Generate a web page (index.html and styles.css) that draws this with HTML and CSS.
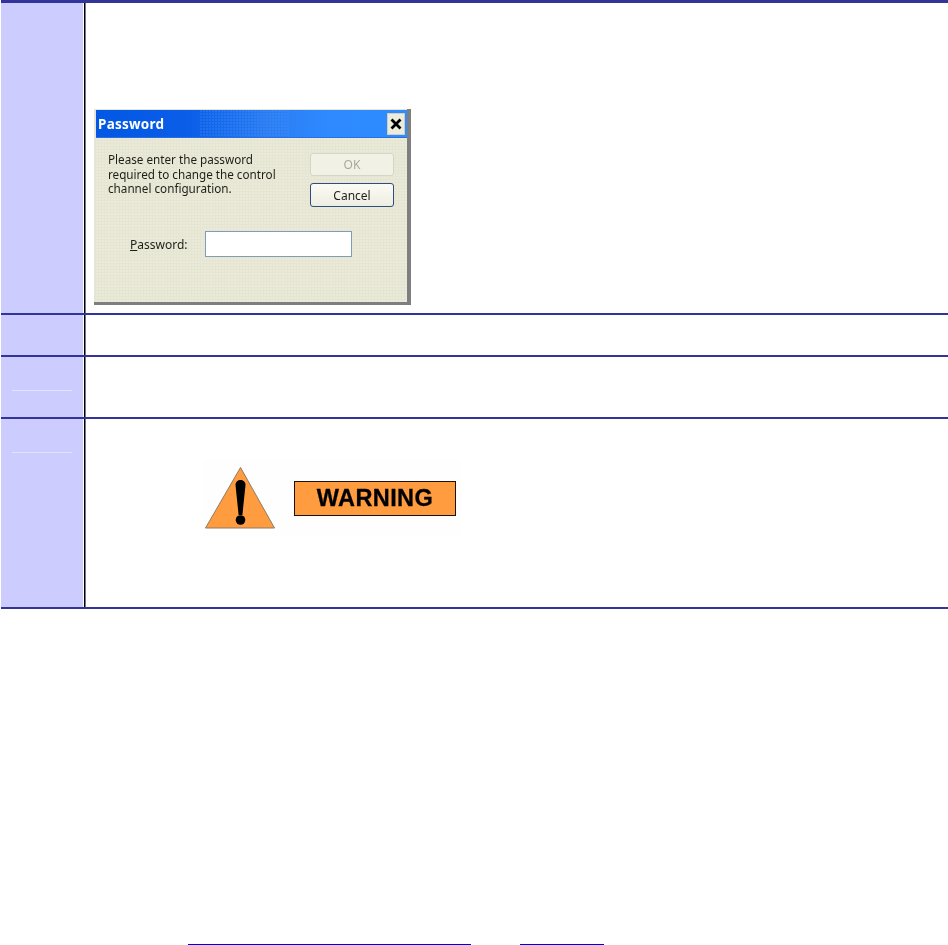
FILE: index.html
```html
<!DOCTYPE html>
<html lang="en">
<head>
<meta charset="utf-8">
<title>Password</title>
<link rel="stylesheet" href="styles.css">
</head>
<body>
<div class="table">
  <div class="row row-first">
    <div class="side"></div>
    <div class="main main-dialog">
      <div class="dialog">
        <div class="dialog-title">
          <span class="dialog-name">Password</span>
          <span class="dialog-close">
            <svg width="12" height="12" viewBox="0 0 12 12"><path d="M1.5 1.5 L10.5 10.5 M10.5 1.5 L1.5 10.5" stroke="#000" stroke-width="2.8" fill="none"/></svg>
          </span>
        </div>
        <div class="dialog-body">
          <div class="dialog-top">
            <p class="dialog-text">Please enter the password<br>required to change the control<br>channel configuration.</p>
            <div class="dialog-buttons">
              <span class="btn btn-off">OK</span>
              <span class="btn btn-on">Cancel</span>
            </div>
          </div>
          <div class="dialog-field">
            <span class="field-label"><u>P</u>assword:</span>
            <span class="field-input"></span>
          </div>
        </div>
      </div>
    </div>
  </div>
  <div class="row row-second">
    <div class="side"></div>
    <div class="main"></div>
  </div>
  <div class="row row-third">
    <div class="side"><span class="side-rule"></span></div>
    <div class="main"></div>
  </div>
  <div class="row row-fourth">
    <div class="side"><span class="side-rule"></span></div>
    <div class="main main-warning">
      <div class="warning">
        <svg class="warning-icon" width="72" height="64" viewBox="0 0 72 64">
          <path d="M36.500 1.500 L70.500 62 L1.500 62 Z" fill="#ff9c3f" stroke="#8f7a66" stroke-width="1"/>
          <path d="M31.500 19 C31.500 15.500 34 14 36.500 14 C39 14 41.500 15.500 41.500 19 L38.400 49 L34.600 49 Z" fill="#000"/>
          <circle cx="36.500" cy="54" r="4.800" fill="#000"/>
        </svg>
        <div class="warning-label">WARNING</div>
      </div>
    </div>
  </div>
</div>
<div class="footer">
  <a class="link link-long" href="#"></a>
  <a class="link link-short" href="#"></a>
</div>
</body>
</html>
```
FILE: styles.css
```css
html, body {
  margin: 0;
  padding: 0;
  background: #fff;
}

body {
  width: 948px;
  height: 945px;
  overflow: hidden;
  font-family: "Liberation Sans", Arial, sans-serif;
}

.table {
  margin-left: 1px;
  width: 947px;
  display: flex;
  flex-direction: column;
  border-bottom: 2px solid #333399;
}

.row {
  display: flex;
  border-top: 2px solid #333399;
}

.row-first { height: 310px; border-top-width: 3px; }
.row-second { height: 40px; }
.row-third { height: 60px; }
.row-fourth { height: 188px; }

.side {
  width: 82px;
  flex: none;
  background: #ccccff;
  box-sizing: border-box;
  padding: 33px 11px 0;
}

.side-rule {
  display: block;
  height: 1px;
  background: #e2e2fb;
}

.main {
  flex: 1;
  margin-left: 1px;
  border-left: 1px solid #000;
  box-shadow: inset 1px 0 #77778a;
}

.main-dialog { padding: 106px 0 0 9px; }
.main-warning { padding: 41px 0 0 118px; }

/* Password dialog */
.dialog {
  width: 317px;
  height: 196px;
  box-sizing: border-box;
  padding: 1px 4px 3px 2px;
  background:
    linear-gradient(#7f7f7f, #7f7f7f) right top / 4px 100% no-repeat,
    linear-gradient(#7f7f7f, #7f7f7f) left bottom / 100% 3px no-repeat,
    #e6e5d4;
  filter: blur(0.4px);
  font-family: "Noto Sans", Tahoma, sans-serif;
  color: #1f1f18;
  display: flex;
  flex-direction: column;
}

.dialog-title {
  position: relative;
  height: 27px;
  flex: none;
  display: flex;
  align-items: center;
  justify-content: space-between;
  padding: 0 2px;
  background: linear-gradient(90deg, #0257e4 0%, #0a5ee8 30%, #2a7cf2 55%, #2f8aff 75%, #2e8cff 100%);
  border-bottom: 1px solid #2a6fdc;
}

.dialog-title::after {
  content: "";
  position: absolute;
  top: 0;
  bottom: 0;
  left: 104px;
  width: 90px;
  background-image: radial-gradient(circle at 1px 1px, rgba(90, 160, 255, 0.2) 1px, transparent 1px);
  background-size: 3px 3px;
}

.dialog-name {
  color: #fff;
  font-size: 13.500px;
  font-weight: 700;
  letter-spacing: 0.250px;
}

.dialog-close {
  width: 18px;
  height: 22px;
  display: flex;
  align-items: center;
  justify-content: center;
  background: #ecebdc;
  border: 1px solid #cfcfc0;
  box-sizing: border-box;
}

.dialog-body {
  flex: 1;
  padding: 15px 13px 0 12px;
  background-color: #e6e5d4;
  background-image: radial-gradient(circle at 1px 1px, #eaead8 1px, transparent 1px);
  background-size: 3px 3px;
}

.dialog-top {
  display: flex;
  justify-content: space-between;
}

.dialog-text {
  margin: -1px 0 0;
  font-size: 11.700px;
  line-height: 14.700px;
}

.dialog-buttons {
  width: 84px;
  display: flex;
  flex-direction: column;
  gap: 7px;
}

.btn {
  display: flex;
  align-items: center;
  justify-content: center;
  box-sizing: border-box;
  border-radius: 3px;
  font-size: 12px;
}

.btn-off {
  height: 23px;
  background: #f2f1e6;
  border: 1px solid #d6d5c6;
  color: #a9a99b;
}

.btn-on {
  height: 24px;
  background: linear-gradient(#fbfbf6, #eeede2);
  border: 1.500px solid #2c4f7f;
  color: #1f1f18;
}

.dialog-field {
  display: flex;
  align-items: center;
  margin-top: 24px;
  padding-left: 22px;
}

.field-label {
  width: 75px;
  flex: none;
  font-size: 12px;
}

.field-input {
  width: 147px;
  height: 26px;
  box-sizing: border-box;
  background: #fff;
  border: 1px solid #7f9db9;
}

/* Warning graphic */
.warning {
  width: 258px;
  height: 76px;
  box-sizing: border-box;
  padding: 6px 0 0 1px;
  background: #fefefe;
  display: flex;
  align-items: flex-start;
}

.warning-icon { flex: none; }

.warning-label {
  width: 162px;
  height: 35px;
  box-sizing: border-box;
  margin: 15px 0 0 18px;
  display: flex;
  align-items: center;
  justify-content: center;
  background: #ff9c3f;
  border-style: solid;
  border-color: #1c1208;
  border-width: 1px;
  font-size: 23.500px;
  font-weight: 700;
  color: #000;
  letter-spacing: 0.400px;
  -webkit-text-stroke: 0.3px #000;
  filter: blur(0.3px);
}

/* Footer links, clipped by the bottom of the page */
.footer {
  display: flex;
  gap: 49px;
  padding: 335px 0 0 188px;
}

.link {
  display: block;
  height: 1px;
  background: #0000ee;
}

.link-long { width: 283px; }
.link-short { width: 84px; }
```
